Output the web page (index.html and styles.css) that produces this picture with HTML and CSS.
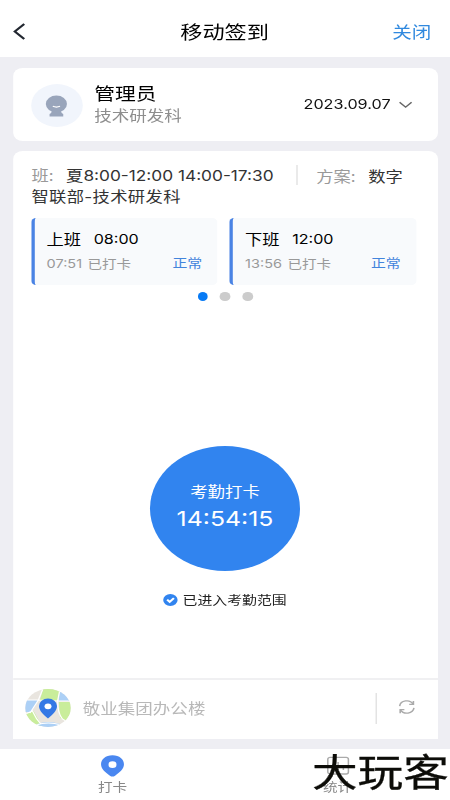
FILE: index.html
```html
<!DOCTYPE html>
<html lang="zh-CN">
<head>
<meta charset="utf-8">
<title>移动签到</title>
<link rel="stylesheet" href="styles.css">
</head>
<body>
<div class="app">
  <header class="header">
    <svg class="back" viewBox="0 0 10 17"><path d="M9.200 1 1.300 8.500l7.900 7.500"/></svg>
    <h1>移动签到</h1>
    <a class="close">关闭</a>
  </header>
  <main class="main">
    <section class="card profile">
      <div class="avatar"><svg viewBox="0 0 18 22"><ellipse cx="9" cy="9" rx="8.800" ry="8.500"/><path d="M5.500 15h7l.9 3 1.300 1v2.500H3.300V19l1.300-1Z"/><path class="smile" d="M6 11.300q3 1.500 6 0"/></svg></div>
      <div class="who"><div class="name">管理员</div><div class="dept">技术研发科</div></div>
      <div class="date">2023.09.07</div>
      <svg class="down" viewBox="0 0 12 8"><path d="m1 1.200 5 5 5-5"/></svg>
    </section>
    <section class="card attendance">
      <div class="plan">
        <div class="plan-row"><span class="label">班:</span><span class="hours">夏8:00-12:00 14:00-17:30</span><i class="split"></i><span class="label scheme">方案:</span><span class="value">数字</span></div>
        <div class="plan-row dept-row">智联部-技术研发科</div>
      </div>
      <div class="shifts">
        <div class="shift">
          <div class="shift-top"><span>上班</span><span class="num">08:00</span></div>
          <div class="shift-sub"><span class="num">07:51</span><span>已打卡</span><b>正常</b></div>
        </div>
        <div class="shift">
          <div class="shift-top"><span>下班</span><span class="num">12:00</span></div>
          <div class="shift-sub"><span class="num">13:56</span><span>已打卡</span><b>正常</b></div>
        </div>
      </div>
      <div class="dots"><i class="on"></i><i></i><i></i></div>
      <div class="clock">
        <button class="punch"><span>考勤打卡</span><strong>14:54:15</strong></button>
        <div class="range"><svg viewBox="0 0 12 12"><circle cx="6" cy="6" r="6"/><path d="m3.300 5.700 2.100 2.100 3.500-3.600"/></svg><span>已进入考勤范围</span></div>
      </div>
      <div class="place">
        <svg class="map" viewBox="0 0 38 38">
          <defs><clipPath id="disc"><circle cx="19" cy="19" r="19"/></clipPath></defs>
          <g clip-path="url(#disc)">
            <path fill="#e9e5df" d="M0 0h38v38H0z"/>
            <path fill="#c9ed9b" d="M15 0h14l-2 12H12zM28 13h10v21l-9-5zM0 25l7-3 7 15H0z"/>
            <path fill="#acd0f6" d="M29 0h9v12H28zM0 11h11L5 23H0zM10 35q9-4 19 0v3H10z"/>
            <path class="roads" d="M15-1 11 11 4 24M0 11h11l17 1h10M29 0l-2 12q0 12 4 18l7 5M0 25l6-3q3 8 7 13M9 36q10-4 21 0"/>
          </g>
          <path fill="#3478e5" d="M19 29.500C15 25.500 11.500 21.500 11.500 17a7.500 7.500 0 0 1 15 0c0 4.500-3.500 8.500-7.500 12.500Z"/>
          <circle cx="19" cy="17.300" r="2.900" fill="#fff"/>
        </svg>
        <span class="address">敬业集团办公楼</span>
        <i class="split"></i>
        <svg class="refresh" viewBox="0 0 16 16"><path d="M1.200 7A6.800 6.800 0 0 1 14 4.700M14.800 9A6.800 6.800 0 0 1 2 11.300"/><path d="M14.300 1v4h-4M1.700 15v-4h4"/></svg>
      </div>
    </section>
  </main>
  <nav class="tabs">
    <div class="tab"><svg viewBox="0 0 20 22"><path fill="#4a87f0" d="M10 0C4 0 .200 4.300.200 9.300c0 5 4.100 8.600 7.600 11.600 1.500 1.300 2.900 1.300 4.400 0 3.500-3 7.600-6.600 7.600-11.600C19.800 4.300 16 0 10 0Z"/><circle cx="10" cy="9.600" r="3.400" fill="#fff"/></svg><span>打卡</span></div>
    <div class="tab"><svg viewBox="0 0 20 22"><rect class="chart" x="1.200" y="2.200" width="17.600" height="17" rx="2"/><path class="chart" d="M5.500 9v6M10 7v8M14.500 11v4"/></svg><span>统计</span></div>
  </nav>
  <div class="watermark">大玩客</div>
</div>
</body>
</html>
```
FILE: styles.css
```css
* { box-sizing: border-box; margin: 0; padding: 0; }
html, body { width: 450px; height: 800px; overflow: hidden; background: #eeeef3; }
svg { display: block; flex: none; fill: none; overflow: visible; }
i, b { font-style: normal; font-weight: 400; }

/* 375px layout widened to fill the 450px window */
.app {
  position: relative;
  display: flex;
  flex-direction: column;
  width: 375px;
  height: 800px;
  transform: scaleX(1.2);
  transform-origin: 0 0;
  font-family: "Noto Sans CJK SC", sans-serif;
  font-size: 14.5px;
  color: #222;
  white-space: nowrap;
}
.num, .date, .hours, .dept-row, .punch strong { font-family: Inter, "Noto Sans CJK SC", sans-serif; }

.header {
  display: grid;
  grid-template-columns: 1fr auto 1fr;
  align-items: center;
  height: 57px;
  padding: 5px 15.500px 0 10.500px;
  background: #fff;
}
.back { width: 10px; height: 17px; stroke: #222730; stroke-width: 1.900; }
h1 { font-size: 18.500px; line-height: 26px; font-weight: 400; color: #000; transform: translateX(2.200px); }
.close { justify-self: end; font-size: 16.300px; line-height: 24px; color: #3089df; }

.main { flex: 1; display: flex; flex-direction: column; gap: 10px; padding: 11px 10.500px 11px; }
.card { background: #fff; border-radius: 8px; }

.profile { display: flex; align-items: center; height: 73px; padding: 0 21px 0 15px; }
.avatar { display: flex; align-items: center; justify-content: center; width: 43px; height: 43px; margin: 1px 10px 0 0; border-radius: 50%; background: #f1f5fc; }
.avatar svg { width: 18px; height: 22px; margin-top: 1px; fill: #99a5bb; }
.avatar .smile { fill: none; stroke: #fff; stroke-width: 1.200; }
.who { flex: 1; margin-top: -3px; }
.name { font-size: 17.300px; line-height: 22px; color: #000; }
.dept { font-size: 14.600px; line-height: 21px; color: #8e8e8e; }
.date { font-size: 13.500px; line-height: 18px; margin-top: -2px; color: #111; }
.down { width: 12px; height: 8px; margin: 1px 0 0 6px; stroke: #666; stroke-width: 1.300; }

.attendance { flex: 1; display: flex; flex-direction: column; border-radius: 8px 8px 0 0; }
.plan { padding: 14px 15.700px 0; color: #333; font-size: 14.400px; }
.plan-row { display: flex; align-items: center; height: 20px; line-height: 20px; }
.dept-row { padding-top: 3px; letter-spacing: .300px; }
.label { color: #999; }
.hours { margin-left: 10.500px; width: 172px; padding-top: 2px; }
.split { flex: none; width: 1px; height: 20px; background: #ddd; }
.plan .split { margin-left: 19.500px; }
.scheme { margin-left: 16px; padding-top: 1px; }
.value { margin-left: 10.500px; padding-top: 1px; }

.shifts { display: grid; grid-template-columns: 1fr 1fr; gap: 10px; padding: 13px 17.800px 0 15.300px; }
.shift { height: 67px; padding: 9px 12.800px 0 10px; border-left: 3.300px solid #4a83e4; border-radius: 4px; background: #f8fafc; }
.shift-top { display: flex; align-items: center; gap: 10.500px; height: 23px; color: #000; font-size: 14.400px; }
.shift-top .num { font-size: 13.400px; }
.shift-sub { display: flex; align-items: center; gap: 4.500px; height: 26px; font-size: 12.100px; color: #999; }
.shift-sub b { margin-left: auto; font-size: 12.400px; color: #4284dc; }
.dots { display: flex; justify-content: center; gap: 10.250px; height: 8.500px; margin-top: 7px; }
.dots i { width: 8.500px; height: 8.500px; border-radius: 50%; background: #ccc; }
.dots .on { background: #077af5; }

.clock { flex: 1; display: flex; flex-direction: column; align-items: center; padding-top: 145px; }
.punch { display: flex; flex-direction: column; align-items: center; width: 125px; height: 125px; padding-top: 34px; border: 0; border-radius: 50%; background: #3184ef; color: #fff; font: inherit; }
.punch span { font-size: 14.500px; line-height: 22px; }
.punch strong { font-size: 20.700px; line-height: 34px; font-weight: 400; }
.range { display: flex; align-items: center; gap: 4px; height: 22px; margin-top: 18px; font-size: 12.400px; }
.range svg { width: 12px; height: 12px; }
.range circle { fill: #3184ef; }
.range path { stroke: #fff; stroke-width: 1.900; }

.place { display: flex; align-items: center; height: 60px; padding: 0 18.500px 2px 10px; border-top: 2px solid #f0f0f2; }
.map { width: 38px; height: 38px; }
.roads { stroke: #fff; stroke-width: 1; }
.address { flex: 1; margin: -1px 0 0 10.500px; font-size: 14.600px; line-height: 22px; color: #b8b8b8; }
.place .split { height: 31px; }
.refresh { width: 14px; height: 14px; margin: -2px 0 0 18.500px; stroke: #aaa; stroke-width: 1.500; }

.tabs { display: grid; grid-template-columns: 1fr 1fr; height: 51px; background: #fff; }
.tab { display: flex; flex-direction: column; align-items: center; padding-top: 6px; font-size: 12.200px; line-height: 20px; color: #888; }
.tab svg { width: 19.500px; height: 22px; }
.chart { stroke: #aaa; stroke-width: 1.300; }
.watermark { position: absolute; left: 260px; top: 750px; font-size: 38px; line-height: 40px; color: #0c0c08; -webkit-text-stroke: .3px #0c0c08; }
```
